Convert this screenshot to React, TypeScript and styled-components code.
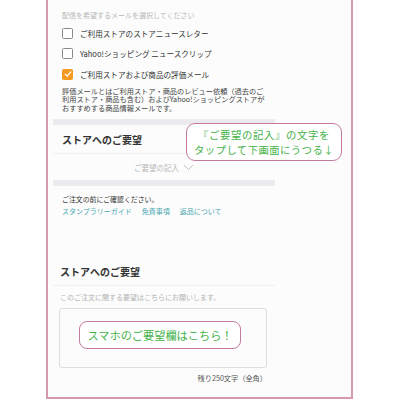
import React from 'react';
import styled, {createGlobalStyle} from 'styled-components';

const GlobalStyle = createGlobalStyle`
    body {
        margin: 0;
        background: #ffffff;
        font-family: "Noto Sans CJK JP", "Noto Sans", sans-serif;
    }
`

const mailOptions = [
    {label: 'ご利用ストアのストアニュースレター', checked: false},
    {label: 'Yahoo!ショッピング ニュースクリップ', checked: false},
    {label: 'ご利用ストアおよび商品の評価メール', checked: true},
]

const links = ['スタンプラリーガイド', '免責事項', '返品について']

const CheckBox = ({checked}: {checked: boolean}) => (
    <StyledBox checked={checked}>
        {checked && (
            <svg width="8" height="8" viewBox="0 0 10 10">
                <path d="M1.5 5.2 L4 7.6 L8.6 2.4" fill="none" stroke="#fff" strokeWidth="1.5" strokeLinecap="round"/>
            </svg>
        )}
    </StyledBox>
)

export default function App() {
    return (
        <>
            <GlobalStyle/>
            <Frame>
                <Content>
                    <Hint>配信を希望するメールを選択してください</Hint>
                    {mailOptions.map(o => (
                        <CheckRow key={o.label}>
                            <CheckBox checked={o.checked}/>
                            <span>{o.label}</span>
                        </CheckRow>
                    ))}
                    <Description>
                        評価メールとはご利用ストア・商品のレビュー依頼（過去のご<br/>
                        利用ストア・商品も含む）およびYahoo!ショッピングストアが<br/>
                        おすすめする商品情報メールです。
                    </Description>
                    <Band/>
                    <Heading>ストアへのご要望</Heading>
                    <Toggle>
                        ご要望の記入
                        <svg width="11" height="7" viewBox="0 0 11 7">
                            <path d="M1 1 L5.5 5.5 L10 1" fill="none" stroke="#c4c4c4" strokeWidth="1"/>
                        </svg>
                    </Toggle>
                    <Band/>
                    <Confirm>ご注文の前にご確認ください。</Confirm>
                    <Links>
                        {links.map(l => <a key={l}>{l}</a>)}
                    </Links>
                    <Heading2>ストアへのご要望</Heading2>
                    <Hint2>このご注文に関する要望はこちらにお願いします。</Hint2>
                    <TextBox>
                        <Note>スマホのご要望欄はこちら！</Note>
                    </TextBox>
                    <Counter>残り250文字（全角）</Counter>
                </Content>
                <Callout>
                    <span>『ご要望の記入』の文字を</span>
                    <span>タップして下画面にうつる↓</span>
                </Callout>
            </Frame>
        </>
    )
}

const Frame = styled.div`
    position: relative;
    box-sizing: border-box;
    margin-left: 46px;
    width: 307px;
    height: 399px;
    border: 2px solid #d59ab1;
    border-top: none;
    background: #fbfcfb;
`

const Content = styled.div`
    width: 222px;
    margin-left: 5px;
    display: flex;
    flex-direction: column;
`

const Hint = styled.div`
    padding: 10px 0 0 9px;
    height: 10px;
    font-size: 7px;
    line-height: 10px;
    color: #b8b8b8;
    margin-bottom: 3px;
`

const CheckRow = styled.div`
    display: flex;
    align-items: center;
    gap: 7px;
    height: 20.5px;
    padding-left: 9px;
    font-size: 7.6px;
    color: #333;
`

const StyledBox = styled.div<{checked: boolean}>`
    box-sizing: border-box;
    width: 11px;
    height: 11px;
    border-radius: 1.5px;
    border: 1px solid ${p => p.checked ? '#f29a22' : '#8a8a8a'};
    background: ${p => p.checked ? '#f29a22' : '#fff'};
    display: flex;
    align-items: center;
    justify-content: center;
`

const Description = styled.p`
    margin: 2px 0 0;
    padding-left: 9px;
    font-size: 7.2px;
    line-height: 8.5px;
    color: #444;
    white-space: nowrap;
`

const Band = styled.div`
    height: 6px;
    margin-top: 7px;
    background: #ebebef;
`

const Heading = styled.div`
    height: 28px;
    padding-left: 9px;
    display: flex;
    align-items: center;
    font-size: 10px;
    font-weight: bold;
    color: #333;
    border-bottom: 1px solid #f0f0f0;
`

const Toggle = styled.div`
    height: 26px;
    display: flex;
    align-items: center;
    justify-content: center;
    gap: 4px;
    font-size: 7.5px;
    color: #b8b8b8;
    & + ${Band} {
        margin-top: 0;
    }
`

const Confirm = styled.div`
    padding: 8px 0 0 9px;
    font-size: 6.9px;
    line-height: 10px;
    color: #333;
`

const Links = styled.div`
    display: flex;
    gap: 10px;
    margin-top: 2px;
    padding-left: 9px;
    font-size: 7px;
    line-height: 10px;
    color: #4ba8b4;
`

const Heading2 = styled.div`
    margin-top: 49px;
    height: 20px;
    padding: 0 0 0 7px;
    font-size: 10px;
    line-height: 14px;
    font-weight: bold;
    color: #333;
    border-bottom: 1px solid #f0f0f0;
`

const Hint2 = styled.div`
    padding: 6px 0 0 7px;
    font-size: 7px;
    line-height: 10px;
    color: #b5b5b5;
`

const TextBox = styled.div`
    box-sizing: border-box;
    margin: 6px 0 0 6px;
    width: 208px;
    height: 60px;
    border: 1px solid #dedede;
    border-radius: 3px;
    background: #fcfcfc;
    display: flex;
    align-items: center;
    justify-content: center;
    padding: 0 6px 6px 0;
`

const Note = styled.div`
    box-sizing: border-box;
    width: 162px;
    height: 28px;
    border: 1.5px solid #c47a9f;
    border-radius: 8px;
    background: #fff;
    display: flex;
    align-items: center;
    justify-content: center;
    font-size: 11.2px;
    color: #45b34a;
`

const Counter = styled.div`
    margin-top: 5px;
    width: 214px;
    text-align: right;
    font-size: 7.2px;
    line-height: 10px;
    color: #555;
`

const Callout = styled.div`
    position: absolute;
    left: 138px;
    top: 123px;
    box-sizing: border-box;
    width: 156px;
    height: 38px;
    border: 1.5px solid #c47a9f;
    border-radius: 9px;
    background: #fff;
    display: flex;
    flex-direction: column;
    align-items: center;
    justify-content: center;
    font-size: 10.4px;
    line-height: 15px;
    color: #45b34a;
    & > span:first-child {
        letter-spacing: 0.6px;
    }
    & > span:last-child {
        letter-spacing: 0.4px;
    }
`
